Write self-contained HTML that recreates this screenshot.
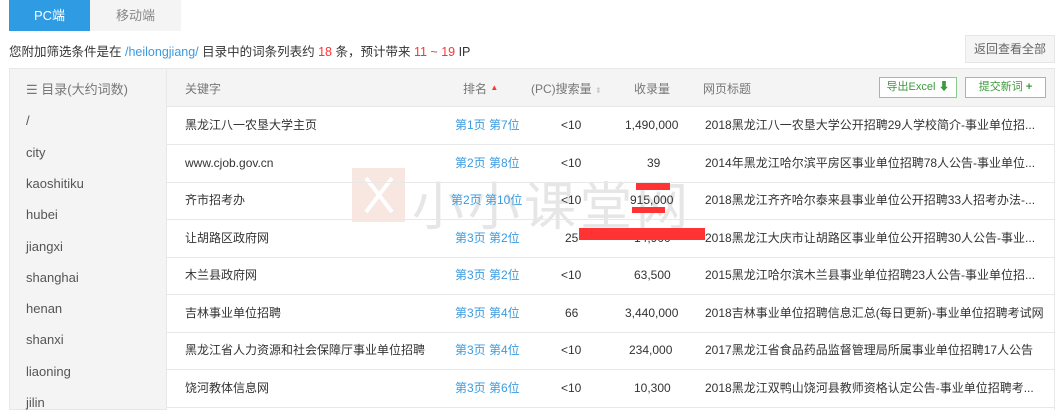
<!DOCTYPE html>
<html><head><meta charset="utf-8"><style>
*{margin:0;padding:0;box-sizing:border-box}
body{width:1059px;height:419px;background:#fff;font-family:"Liberation Sans","Noto Sans CJK SC",sans-serif;font-size:12px;color:#333;position:relative;overflow:hidden}
.abs{position:absolute;white-space:nowrap}
.tab{position:absolute;top:0;height:31px;line-height:31px;text-align:center;font-size:13px}
.blue{color:#3a9be0}.red{color:#f33}
.row{position:absolute;left:167px;width:888px;height:38px;border-bottom:1px solid #e8e8e8;line-height:37px}
.row span{position:absolute;white-space:nowrap}
.side{position:absolute;left:26px;color:#555;font-size:13px}
</style></head><body>
<div class="tab" style="left:9px;width:81px;background:#2f9be3;color:#fff">PC端</div>
<div class="tab" style="left:90px;width:91px;background:#f4f4f4;color:#888">移动端</div>
<div class="abs" style="left:9px;top:41px;font-size:12.5px">您附加筛选条件是在 <span class="blue">/heilongjiang/</span> 目录中的词条列表约 <span class="red">18</span> 条，预计带来 <span class="red">11 ~ 19</span> IP</div>
<div class="abs" style="left:965px;top:35px;width:90px;height:28px;background:#f5f5f5;border:1px solid #e6e6e6;line-height:26px;text-align:center;color:#666">返回查看全部</div>
<div class="abs" style="left:9px;top:68px;width:158px;height:342px;background:#f4f4f4;border:1px solid #e8e8e8"></div>
<div class="abs" style="left:167px;top:68px;width:888px;height:39px;background:#f4f4f4;border-top:1px solid #e8e8e8;border-bottom:1px solid #e8e8e8"></div>
<div class="abs" style="left:1054px;top:68px;width:1px;height:342px;background:#e8e8e8"></div>
<div class="abs" style="left:26px;top:79px;color:#777;font-size:13px">☰ 目录(大约词数)</div>
<div class="abs" style="left:185px;top:80px;color:#777">关键字</div>
<div class="abs" style="left:463px;top:80px;color:#777">排名 <span style="font-size:8px;color:#f33;position:relative;top:-3px">▲</span></div>
<div class="abs" style="left:531px;top:80px;color:#777">(PC)搜索量 <span style="font-size:8px;color:#ccc">⬍</span></div>
<div class="abs" style="left:634px;top:80px;color:#777">收录量</div>
<div class="abs" style="left:703px;top:80px;color:#777">网页标题</div>
<div class="abs" style="left:879px;top:77px;width:78px;height:21px;border:1px solid #8cc98c;background:#fff;color:#3a9b3a;line-height:19px;text-align:center;font-size:11px">导出Excel <b>⬇</b></div>
<div class="abs" style="left:965px;top:77px;width:81px;height:21px;border:1px solid #8cc98c;background:#fff;color:#3a9b3a;line-height:19px;text-align:center;font-size:11px">提交新词 <b>+</b></div>

<div class="side" style="top:113px">/</div>
<div class="side" style="top:145px">city</div>
<div class="side" style="top:176px">kaoshitiku</div>
<div class="side" style="top:207px">hubei</div>
<div class="side" style="top:239px">jiangxi</div>
<div class="side" style="top:270px">shanghai</div>
<div class="side" style="top:301px">henan</div>
<div class="side" style="top:332px">shanxi</div>
<div class="side" style="top:364px">liaoning</div>
<div class="side" style="top:395px">jilin</div>

<svg class="abs" style="left:352px;top:168px" width="53" height="54"><rect width="53" height="54" fill="#f8e6e1"/><path d="M14 10L40 44M40 10L14 44" stroke="#fff" stroke-width="4"/></svg>
<div class="abs" style="left:412px;top:165px;font-size:52px;color:#e6e6e6;letter-spacing:4px">小小课堂网</div>

<div class="row" style="top:107px"><span style="left:18px">黑龙江八一农垦大学主页</span><span class="blue" style="left:288px">第1页 第7位</span><span style="left:394px">&lt;10</span><span style="left:458px">1,490,000</span><span style="left:538px">2018黑龙江八一农垦大学公开招聘29人学校简介-事业单位招...</span></div>
<div class="row" style="top:145px"><span style="left:18px">www.cjob.gov.cn</span><span class="blue" style="left:288px">第2页 第8位</span><span style="left:394px">&lt;10</span><span style="left:480px">39</span><span style="left:538px">2014年黑龙江哈尔滨平房区事业单位招聘78人公告-事业单位...</span></div>
<div class="row" style="top:182px"><span style="left:18px">齐市招考办</span><span class="blue" style="left:284px">第2页 第10位</span><span style="left:394px">&lt;10</span><span style="left:463px">915,000</span><span style="left:538px">2018黑龙江齐齐哈尔泰来县事业单位公开招聘33人招考办法-...</span></div>
<div class="row" style="top:220px"><span style="left:18px">让胡路区政府网</span><span class="blue" style="left:288px">第3页 第2位</span><span style="left:398px">25</span><span style="left:467px">14,900</span><span style="left:538px">2018黑龙江大庆市让胡路区事业单位公开招聘30人公告-事业...</span></div>
<div class="row" style="top:257px"><span style="left:18px">木兰县政府网</span><span class="blue" style="left:288px">第3页 第2位</span><span style="left:394px">&lt;10</span><span style="left:467px">63,500</span><span style="left:538px">2015黑龙江哈尔滨木兰县事业单位招聘23人公告-事业单位招...</span></div>
<div class="row" style="top:295px"><span style="left:18px">吉林事业单位招聘</span><span class="blue" style="left:288px">第3页 第4位</span><span style="left:398px">66</span><span style="left:458px">3,440,000</span><span style="left:538px">2018吉林事业单位招聘信息汇总(每日更新)-事业单位招聘考试网</span></div>
<div class="row" style="top:332px"><span style="left:18px">黑龙江省人力资源和社会保障厅事业单位招聘</span><span class="blue" style="left:288px">第3页 第4位</span><span style="left:394px">&lt;10</span><span style="left:462px">234,000</span><span style="left:538px">2017黑龙江省食品药品监督管理局所属事业单位招聘17人公告</span></div>
<div class="row" style="top:370px"><span style="left:18px">饶河教体信息网</span><span class="blue" style="left:288px">第3页 第6位</span><span style="left:394px">&lt;10</span><span style="left:467px">10,300</span><span style="left:538px">2018黑龙江双鸭山饶河县教师资格认定公告-事业单位招聘考...</span></div>

<div class="abs" style="left:636px;top:183px;width:34px;height:7px;background:#f33"></div>
<div class="abs" style="left:632px;top:207px;width:33px;height:6px;background:#f33"></div>
<div class="abs" style="left:579px;top:228px;width:126px;height:12px;background:#f33"></div>
</body></html>
